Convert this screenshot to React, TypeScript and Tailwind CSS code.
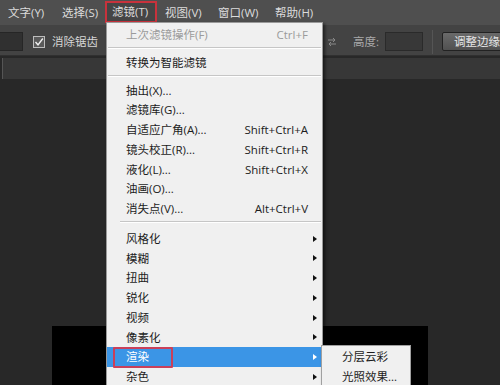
import React from 'react';

type Entry =
  | { kind: 'item'; label: string; keys?: string; disabled?: boolean }
  | { kind: 'sep'; h: string; inset: string }
  | { kind: 'sub'; label: string; active?: boolean };

const menuBar = [
  { label: '文字(Y)', w: 'w-[54px] pl-[8px]' },
  { label: '选择(S)', w: 'w-[51px] pl-[8px]' },
  { label: '滤镜(T)', w: 'w-[52px] pl-[5px]', open: true },
  { label: '视图(V)', w: 'w-[53px] pl-[8px]' },
  { label: '窗口(W)', w: 'w-[57px] pl-[8px]' },
  { label: '帮助(H)', w: 'w-[50px] pl-[8px]' },
];

const entries: Entry[] = [
  { kind: 'item', label: '上次滤镜操作(F)', keys: 'Ctrl+F', disabled: true },
  { kind: 'sep', h: 'h-[8px]', inset: 'ml-[1px]' },
  { kind: 'item', label: '转换为智能滤镜' },
  { kind: 'sep', h: 'h-[8px]', inset: 'ml-[1px]' },
  { kind: 'item', label: '抽出(X)...' },
  { kind: 'item', label: '滤镜库(G)...' },
  { kind: 'item', label: '自适应广角(A)...', keys: 'Shift+Ctrl+A' },
  { kind: 'item', label: '镜头校正(R)...', keys: 'Shift+Ctrl+R' },
  { kind: 'item', label: '液化(L)...', keys: 'Shift+Ctrl+X' },
  { kind: 'item', label: '油画(O)...' },
  { kind: 'item', label: '消失点(V)...', keys: 'Alt+Ctrl+V' },
  { kind: 'sep', h: 'h-[10px]', inset: 'ml-[13px]' },
  { kind: 'sub', label: '风格化' },
  { kind: 'sub', label: '模糊' },
  { kind: 'sub', label: '扭曲' },
  { kind: 'sub', label: '锐化' },
  { kind: 'sub', label: '视频' },
  { kind: 'sub', label: '像素化' },
  { kind: 'sub', label: '渲染', active: true },
  { kind: 'sub', label: '杂色' },
];

const Arrow = ({ white }: { white?: boolean }) => (
  <span
    className={
      'w-0 h-0 border-y-[3.5px] border-y-transparent border-l-[4px] ' +
      (white ? 'border-l-white' : 'border-l-[#111]')
    }
  />
);

const Row = ({ e }: { e: Entry }) => {
  if (e.kind === 'sep') {
    return (
      <div className={e.h + ' pt-[2px] pr-[1px] ' + e.inset}>
        <div className="border-t border-[#c6c6c6] border-b border-b-white" />
      </div>
    );
  }
  if (e.kind === 'sub') {
    return (
      <div
        className={
          'relative flex items-center justify-between h-[19.75px] pl-[19px] pr-[5px] ' +
          (e.active ? 'bg-[#3b95e6] text-white' : 'text-[#1c1c1c]')
        }
      >
        <span>{e.label}</span>
        <Arrow white={e.active} />
        {e.active && (
          <div className="absolute left-[6px] top-0 w-[60px] h-[21px] border-2 border-[#c9405a] rounded-[1px]" />
        )}
      </div>
    );
  }
  return (
    <div
      className={
        'flex items-center justify-between h-[19.75px] pl-[19px] pr-[14px] ' +
        (e.disabled ? 'text-[#9b9b9b]' : 'text-[#1c1c1c]')
      }
    >
      <span>{e.label}</span>
      {e.keys && <span>{e.keys}</span>}
    </div>
  );
};

export default function App() {
  return (
    <div className="relative w-[500px] h-[385px] overflow-hidden bg-[#282828] font-['Open_Sans','Noto_Sans_CJK_SC',sans-serif] text-[11.5px] leading-none">
      {/* menu bar */}
      <div className="flex h-[25px] bg-[#4f4f4f] text-[#dcdcdc]">
        {menuBar.map((m) => (
          <div
            key={m.label}
            className={
              'flex items-center shrink-0 ' +
              m.w +
              (m.open ? ' mt-[1px] h-[22px] border-2 border-[#c8323c] bg-[#454545]' : ' h-[25px]')
            }
          >
            {m.label}
          </div>
        ))}
      </div>

      {/* options bar */}
      <div className="flex items-center h-[31px] pt-[3px] bg-[#434343] border-b border-[#303030] text-[#d6d6d6]">
        <div className="flex items-center w-[327px] shrink-0">
          <div className="w-[23px] h-[19px] bg-[#303030] border border-[#262626] border-l-0" />
          <div className="ml-[10px] w-[12px] h-[12px] border border-[#bdbdbd] bg-[#5a5a5a] flex items-center justify-center">
            <svg width="10" height="10" viewBox="0 0 10 10">
              <path d="M1.5 5 L4 7.8 L8.8 1.5" fill="none" stroke="#f0f0f0" strokeWidth="1.4" />
            </svg>
          </div>
          <span className="ml-[7px]">消除锯齿</span>
        </div>
        <svg width="10" height="10" viewBox="0 0 10 10" className="shrink-0">
          <path d="M1 3 H8 M6 1 L8 3 L6 5 M9 7 H2 M4 5 L2 7 L4 9" fill="none" stroke="#8a8a8a" strokeWidth="1" />
        </svg>
        <span className="ml-[16px] w-[32px] shrink-0 text-[#a9a9a9]">高度:</span>
        <div className="w-[38px] h-[19px] shrink-0 bg-[#383838] border border-[#2a2a2a]" />
        <div className="ml-[9px] w-px h-[24px] shrink-0 bg-[#2e2e2e] border-r border-[#555]" />
        <div className="ml-[9px] w-[70px] h-[19px] shrink-0 flex items-center pl-[11px] border border-[#222] rounded-[2px] bg-gradient-to-b from-[#6a6a6a] to-[#505050] text-[#e6e6e6]">
          调整边缘
        </div>
      </div>

      {/* document tab strip */}
      <div className="h-[21px] mt-[2px] bg-[#373737] border-l border-[#555] ml-[2px]" />

      {/* canvas */}
      <div className="pt-[247px] pl-[52px]">
        <div className="w-[376px] h-[100px] bg-black" />
      </div>

      {/* filter menu */}
      <div className="absolute left-[106px] top-[22px] w-[217px] h-[380px] pt-[2px] bg-[#f0f0f0] border border-[#9a9a9a] shadow-[2px_2px_3px_rgba(0,0,0,0.55)]">
        {entries.map((e, i) => (
          <Row key={i} e={e} />
        ))}
      </div>

      {/* render submenu */}
      <div className="absolute left-[321px] top-[345px] w-[90px] h-[50px] pt-[1px] bg-[#f0f0f0] border border-[#a0a0a0] shadow-[2px_2px_3px_rgba(0,0,0,0.5)] text-[#1c1c1c]">
        <div className="flex items-center h-[19.75px] pl-[20px]">分层云彩</div>
        <div className="flex items-center h-[19.75px] pl-[20px]">光照效果...</div>
      </div>
    </div>
  );
}
